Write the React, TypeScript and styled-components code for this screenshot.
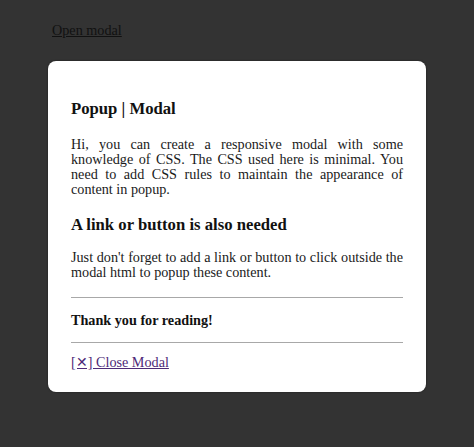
import React from 'react';
import styled, { createGlobalStyle } from 'styled-components';

const GlobalStyle = createGlobalStyle`
  html, body {
    margin: 0;
    padding: 0;
    background: #333333;
    font-family: "Liberation Serif", "Times New Roman", serif;
  }
`;

const Page = styled.div`
  min-height: 447px;
  padding: 23px 0 0;
  box-sizing: border-box;
`;

const OpenLink = styled.a`
  display: block;
  margin-left: 52px;
  font-size: 14.2px;
  line-height: 15px;
  color: #111111;
  text-decoration: underline;
  width: max-content;
`;

const Modal = styled.div`
  width: 378px;
  margin: 23px auto 0;
  background: #ffffff;
  border-radius: 8px;
  padding: 39px 23px 21px;
  box-sizing: border-box;
  box-shadow: 0 0 2px rgba(0, 0, 0, 0.5);
`;

const Title = styled.h3<{ gap?: number }>`
  margin: ${p => p.gap ?? 0}px 0 0;
  font-size: 16.7px;
  line-height: 18px;
  font-weight: bold;
  color: #111111;
`;

const Text = styled.p<{ gap: number }>`
  margin: ${p => p.gap}px 0 0;
  font-size: 14.2px;
  line-height: 15px;
  color: #1a1a1a;
  text-align: justify;
`;

const Thanks = styled.h4`
  margin: 15px 0 0;
  font-size: 14.2px;
  line-height: 15px;
  font-weight: bold;
  color: #111111;
`;

const Rule = styled.hr<{ gap: number }>`
  margin: ${p => p.gap}px 0 0;
  border: none;
  border-top: 1px solid #a8a8a8;
  height: 0;
`;

const CloseLink = styled.a`
  display: inline-block;
  margin-top: 12px;
  font-size: 14.2px;
  line-height: 15px;
  color: #4e2a78;
  text-decoration: underline;
`;

const App: React.FC = () => {
  return (
    <Page>
      <GlobalStyle />
      <OpenLink href="#popup">Open modal</OpenLink>
      <Modal>
        <Title>Popup | Modal</Title>
        <Text gap={19}>
          Hi, you can create a responsive modal with some knowledge of CSS. The CSS used here is
          minimal. You need to add CSS rules to maintain the appearance of content in popup.
        </Text>
        <Title gap={19}>A link or button is also needed</Title>
        <Text gap={16}>
          Just don't forget to add a link or button to click outside the modal html to popup these
          content.
        </Text>
        <Rule gap={17} />
        <Thanks>Thank you for reading!</Thanks>
        <Rule gap={14} />
        <CloseLink href="#">[&#10005;] Close Modal</CloseLink>
      </Modal>
    </Page>
  );
};

export default App;
